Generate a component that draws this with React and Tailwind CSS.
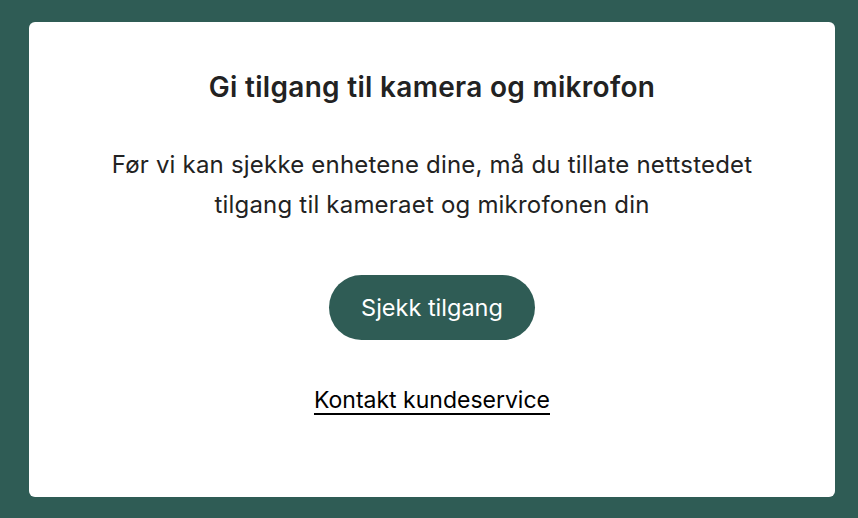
import React from 'react';

const App = () => {
  return (
    <div className="min-h-screen w-full bg-[#2f5c55] pt-[22px] pb-[21px] pl-[29px] pr-[23px] font-['Inter',sans-serif]">
      <div className="h-[475px] bg-white rounded-[6px] flex flex-col items-center text-center">

        {/* Heading */}
        <h1 className="mt-[49px] text-[28px] leading-[32px] font-semibold text-[#222222] tracking-[0.3px]">
          Gi tilgang til kamera og mikrofon
        </h1>

        {/* Description */}
        <p className="mt-[42px] text-[24px] leading-[40px] text-[#222222] tracking-[0.2px]">
          Før vi kan sjekke enhetene dine, må du tillate nettstedet
          <br />
          tilgang til kameraet og mikrofonen din
        </p>

        {/* Primary action */}
        <button className="mt-[50px] h-[65px] px-[32px] rounded-full bg-[#2f5c55] text-white text-[23.5px]">
          Sjekk tilgang
        </button>

        {/* Secondary link */}
        <a
          href="#"
          className="mt-[45px] text-[23px] leading-[30px] text-black underline underline-offset-[5px]"
        >
          Kontakt kundeservice
        </a>
      </div>
    </div>
  );
};

export default App;
